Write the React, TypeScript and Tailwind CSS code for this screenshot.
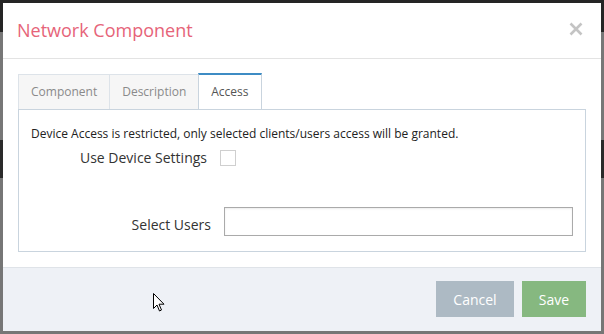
import React, { useState } from "react";

const tabs = ["Component", "Description", "Access"];

const NetworkComponentModal: React.FC = () => {
  const [activeTab, setActiveTab] = useState("Access");
  const [useDevice, setUseDevice] = useState(false);
  const [users, setUsers] = useState("");

  return (
    <div className="relative w-[598px] h-[328px] bg-white flex flex-col" style={{ fontFamily: "'Open Sans', 'Liberation Sans', sans-serif" }}>
      {/* header */}
      <div className="h-[56px] shrink-0 flex items-center justify-between pl-[14px] pr-[18px] border-b border-[#e3e3e3]">
        <p className="text-[18px] text-[#e66479] pb-[1px]">Network Component</p>
        <button className="pb-[3px]">
          <svg width="14" height="14" viewBox="0 0 14 14">
            <path d="M1.5 1.5 L12.5 12.5 M12.5 1.5 L1.5 12.5" stroke="#c4c4c4" strokeWidth="2.6" />
          </svg>
        </button>
      </div>

      {/* body */}
      <div className="flex-1 px-[15px] pt-[14px] pb-[15px]">
        <div className="flex">
          {tabs.map((tab) =>
            tab === activeTab ? (
              <div
                key={tab}
                onClick={() => setActiveTab(tab)}
                className="h-[36px] px-[12px] flex items-center text-[12px] text-[#555] bg-white border-x border-[#c9d4de] border-t-2 border-t-[#3d8cc4] -mb-px relative z-10 cursor-pointer"
              >
                {tab}
              </div>
            ) : (
              <div
                key={tab}
                onClick={() => setActiveTab(tab)}
                className="h-[35px] mt-[1px] px-[12px] flex items-center text-[12px] text-[#8a8a8a] bg-[#f6f6f6] border-l border-t border-[#dde3e9] cursor-pointer"
              >
                {tab}
              </div>
            )
          )}
        </div>

        <div className="h-[143px] border border-[#c9d4de] pt-[16px]">
          <p className="pl-[12px] text-[12px] leading-[16px] text-[#222]">
            Device Access is restricted, only selected clients/users access will be granted.
          </p>
          <div className="flex items-center h-[20px] mt-[6px]">
            <p className="w-[188px] text-right text-[14px] leading-[20px] text-[#333]">Use Device Settings</p>
            <input
              type="checkbox"
              checked={useDevice}
              onChange={(e) => setUseDevice(e.target.checked)}
              className="ml-[13px] w-[16px] h-[16px] appearance-none border border-[#cfcfcf] bg-white"
            />
          </div>
          <div className="flex items-center mt-[39px]">
            <p className="w-[192px] text-right text-[14px] leading-[20px] text-[#333] mt-[7px]">Select Users</p>
            <input
              type="text"
              value={users}
              onChange={(e) => setUsers(e.target.value)}
              className="ml-[13px] w-[349px] h-[29px] border border-[#aaaaaa] outline-none px-2 text-[13px] shadow-[inset_0_1px_2px_rgba(0,0,0,0.08)]"
            />
          </div>
        </div>
      </div>

      {/* footer */}
      <div className="h-[64px] shrink-0 bg-[#eef1f6] border-t border-[#dfe3e8] flex justify-end items-start pt-[13px] pr-[15px] gap-[8px]">
        <button className="w-[78px] h-[36px] bg-[#adbac4] text-white text-[14px]">Cancel</button>
        <button className="w-[64px] h-[36px] bg-[#86b880] text-white text-[14px]">Save</button>
      </div>

      {/* mouse pointer left in the screenshot */}
      <svg className="absolute left-[150px] top-[290px]" width="12" height="19" viewBox="0 0 12 19">
        <path d="M0.5 0.5 L0.5 15.5 L4 12 L6.5 18 L8.5 17 L6 11.2 L11 11.2 Z" fill="white" stroke="black" strokeWidth="1" strokeLinejoin="round" />
      </svg>
    </div>
  );
};

export default function App() {
  return (
    <div className="relative w-[604px] h-[334px] overflow-hidden bg-[#767676]">
      {/* backdrop bands */}
      <div className="flex flex-col h-full">
        <div className="h-[32px] bg-[#252525]" />
        <div className="h-[108px] bg-[#777777]" />
        <div className="h-[38px] bg-[#2a2a2a]" />
        <div className="flex-1 bg-[#767676]" />
      </div>
      <div className="absolute left-[3px] top-[3px]">
        <NetworkComponentModal />
      </div>
    </div>
  );
}
